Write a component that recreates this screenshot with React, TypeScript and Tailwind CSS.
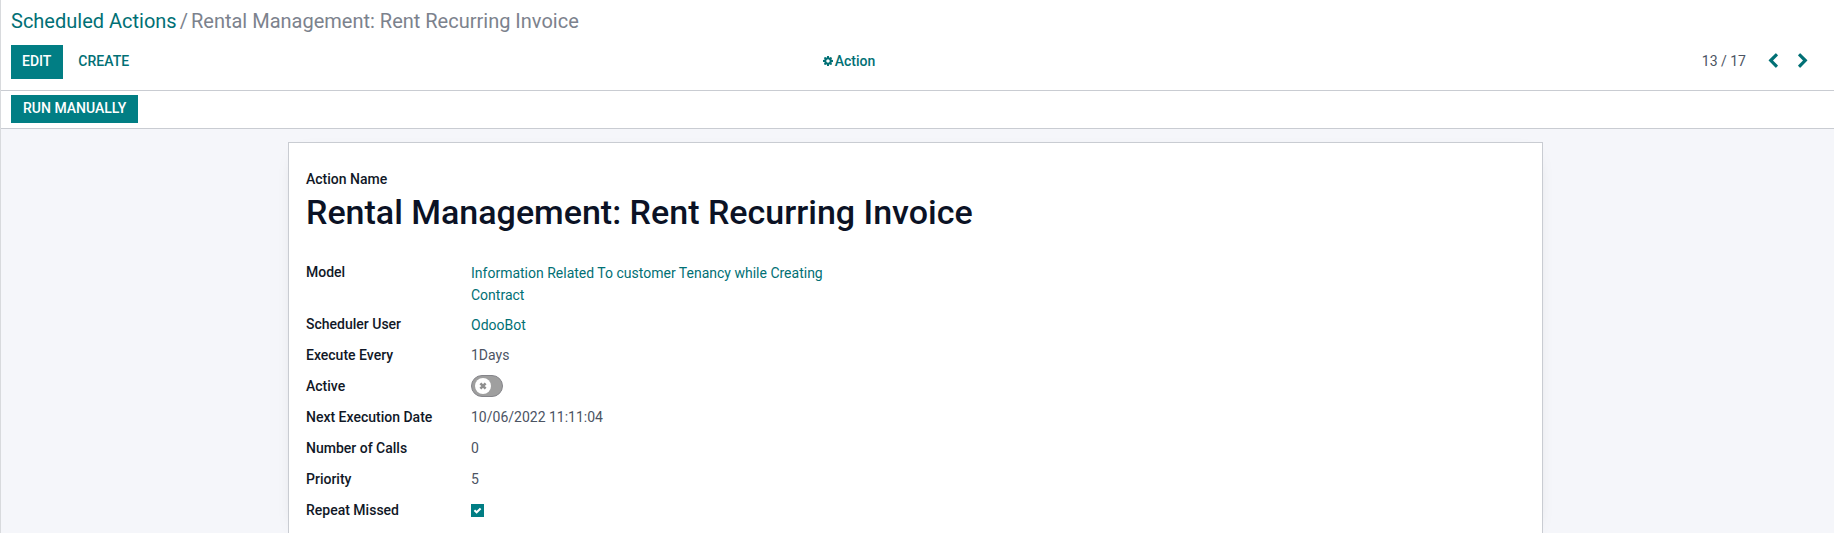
import type { ReactNode } from 'react';

function CogIcon() {
  return (
    <svg viewBox="0 0 1536 1792" className="h-3 w-[10px] fill-current" aria-hidden="true">
      <path d="M1024 896q0-106-75-181t-181-75-181 75-75 181 75 181 181 75 181-75 75-181zm512-109v222q0 12-8 23t-20 13l-185 28q-19 54-39 91 35 50 107 138 10 12 10 25t-9 23q-27 37-99 108t-94 71q-12 0-26-9l-138-108q-44 23-91 38-16 136-29 186-7 28-36 28h-222q-14 0-24.500-8.500t-11.500-21.500l-28-184q-49-16-90-37l-141 107q-10 9-25 9-14 0-25-11-126-114-165-168-7-10-7-23 0-12 8-23 15-21 51-66.500t54-70.500q-27-50-41-99l-183-27q-13-2-21-12.500t-8-23.500v-222q0-12 8-23t19-13l186-28q14-46 39-92-40-57-107-138-10-12-10-24 0-10 9-23 26-36 98.500-107.500t94.500-71.500q13 0 26 10l138 107q44-23 91-38 16-136 29-186 7-28 36-28h222q14 0 24.500 8.500t11.500 21.500l28 184q49 16 90 37l142-107q9-9 24-9 13 0 25 10 129 119 165 170 7 8 7 22 0 12-8 23-15 21-51 66.500t-54 70.500q26 50 41 98l183 28q13 2 21 12.500t8 23.500z" />
    </svg>
  );
}

function Chevron({ direction }: { direction: 'left' | 'right' }) {
  return (
    <svg viewBox="0 0 1792 1792" className="size-4 fill-current" aria-hidden="true">
      {direction === 'left' ? (
        <path d="M1427 301l-531 531 531 531q19 19 19 45t-19 45l-166 166q-19 19-45 19t-45-19l-742-742q-19-19-19-45t19-45l742-742q19-19 45-19t45 19l166 166q19 19 19 45t-19 45z" />
      ) : (
        <path d="M1363 877l-742 742q-19 19-45 19t-45-19l-166-166q-19-19-19-45t19-45l531-531-531-531q-19-19-19-45t19-45l166-166q19-19 45-19t45 19l742 742q19 19 19 45t-19 45z" />
      )}
    </svg>
  );
}

function Field({ id, label, children }: { id: string; label: string; children: ReactNode }) {
  return (
    <div className="flex min-h-[31px] items-start">
      <label htmlFor={id} className="w-[165px] shrink-0 leading-[22px] font-medium text-[#111827]">
        {label}
      </label>
      <div className="w-[400px] leading-[22px]">{children}</div>
    </div>
  );
}

export default function App() {
  return (
    <div className="flex min-h-screen flex-col border-l border-[#d8dadd] bg-[#f5f6fa] font-[Roboto,sans-serif] text-[14px] text-[#4c5463]">
      <header className="border-b border-[#c9ccd2] bg-white px-[10px] pt-[9px] pb-[11px]">
        <nav aria-label="Breadcrumb" className="flex gap-[3px] text-[20px] leading-6 text-[#7c828d]">
          <a href="#actions" className="text-[#017075]">Scheduled Actions</a>
          <span>/</span>
          <span>Rental Management: Rent Recurring Invoice</span>
        </nav>
        <div className="mt-3 grid grid-cols-3 items-center">
          <div className="flex h-[34px] gap-1">
            <button type="button" className="bg-[#017e84] pr-3 pb-[2px] pl-[11px] font-medium text-white">EDIT</button>
            <button type="button" className="px-[11px] pb-[2px] font-medium text-[#017075]">CREATE</button>
          </div>
          <button type="button" className="flex items-center gap-[2px] justify-self-center pr-[137px] pb-[2px] font-medium text-[#017075]">
            <CogIcon />
            Action
          </button>
          <div className="flex items-center justify-end pr-[6px] pb-[2px]">
            <span className="mr-3">13 / 17</span>
            <button type="button" aria-label="Previous" className="px-[7px] text-[#017075]"><Chevron direction="left" /></button>
            <button type="button" aria-label="Next" className="px-[7px] text-[#017075]"><Chevron direction="right" /></button>
          </div>
        </div>
      </header>

      <div className="border-b border-[#c9ccd2] bg-white px-[10px] pt-1 pb-[5px]">
        <button type="button" className="block h-7 bg-[#017e84] pr-3 pb-[2px] pl-[12px] font-medium text-white">RUN MANUALLY</button>
      </div>

      <main className="flex flex-1 flex-col pt-[13px] pr-[4px]">
        <section className="mx-auto w-full max-w-[1255px] flex-1 border border-b-0 border-[#c9ccd2] bg-white px-[17px] pt-[25px] shadow-[0_5px_20px_-15px_rgba(0,0,0,0.4)]">
          <div className="leading-[22px] font-medium text-[#111827]">Action Name</div>
          <h1 className="pt-px text-[34px] leading-[42px] font-medium text-[#0b1225]">
            Rental Management: Rent Recurring Invoice
          </h1>
          <div className="mt-7">
            <div className="pb-[7px]">
              <Field id="model" label="Model">
                <a id="model" href="#model" className="block pt-px text-[#017075]">
                  Information Related To customer Tenancy while Creating Contract
                </a>
              </Field>
            </div>
            <Field id="user" label="Scheduler User">
              <a id="user" href="#user" className="block pt-px text-[#017075]">OdooBot</a>
            </Field>
            <Field id="every" label="Execute Every">
              <output id="every">1Days</output>
            </Field>
            <Field id="active" label="Active">
              <span className="relative flex h-[22px] w-8">
                <input
                  id="active"
                  type="checkbox"
                  role="switch"
                  className="h-[22px] w-8 appearance-none rounded-full border border-[#85858a] bg-[#9f9f9f]"
                />
                <svg viewBox="0 0 16 16" className="pointer-events-none absolute top-[3px] left-1 size-4" aria-hidden="true">
                  <circle cx="8" cy="8" r="8" fill="white" />
                  <path d="M5.400 5.400L10.600 10.600M10.600 5.400L5.400 10.600" stroke="#8f8f8f" strokeWidth="2.600" />
                </svg>
              </span>
            </Field>
            <Field id="next" label="Next Execution Date">
              <output id="next">10/06/2022 11:11:04</output>
            </Field>
            <Field id="calls" label="Number of Calls">
              <output id="calls">0</output>
            </Field>
            <Field id="priority" label="Priority">
              <output id="priority">5</output>
            </Field>
            <Field id="missed" label="Repeat Missed">
              <span className="relative flex h-[22px] w-[13px] items-center">
                <input id="missed" type="checkbox" defaultChecked className="size-[13px] appearance-none bg-[#017e84]" />
                <svg viewBox="0 0 13 13" className="pointer-events-none absolute size-[13px]" aria-hidden="true">
                  <path d="M3.400 6.300L5.600 8.300L9.600 4.500" fill="none" stroke="white" strokeWidth="2" />
                </svg>
              </span>
            </Field>
          </div>
        </section>
      </main>
    </div>
  );
}
